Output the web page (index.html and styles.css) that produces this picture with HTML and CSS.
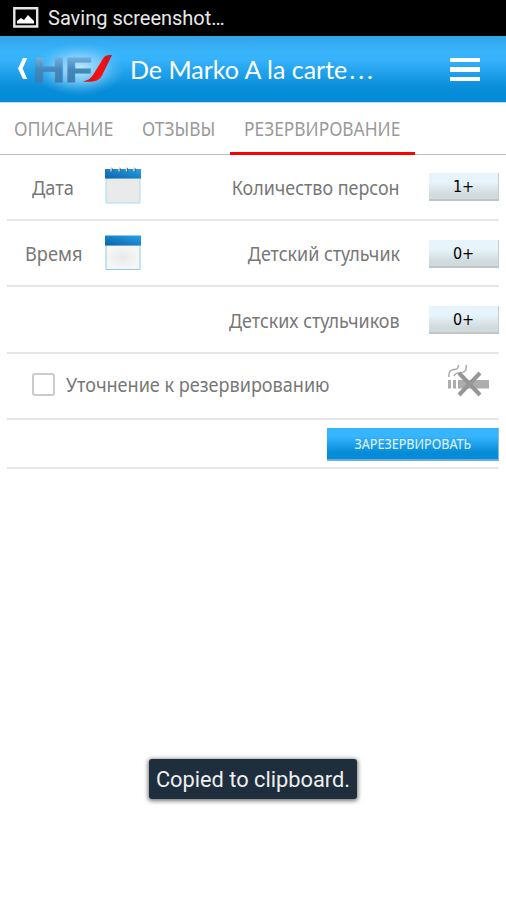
FILE: index.html
```html
<!DOCTYPE html>
<html lang="ru">
<head>
<meta charset="utf-8">
<title>De Marko A la carte</title>
<link rel="stylesheet" href="styles.css">
</head>
<body>
<div class="status">
  <svg class="status-icon" width="26" height="21" viewBox="0 0 26 21"><path d="M1.3 1.3h22.9v18.2H1.3z" fill="none" stroke="#e6e6e6" stroke-width="2.4"/><path d="M4 16.5V14l4-3 3 2 4-5 3 3 3 3v2.500z" fill="#fff"/></svg>
  <span>Saving screenshot…</span>
</div>
<header class="header">
  <svg class="back" width="12" height="24" viewBox="0 0 12 24"><path d="M6 1h4.200L5.600 11.500 10.200 22H6L1 11.500z" fill="#fff"/></svg>
  <svg class="logo" width="94" height="58" viewBox="0 0 94 58">
    <defs>
      <radialGradient id="glow"><stop offset="0" stop-color="#d8f2ff" stop-opacity=".9"/><stop offset=".5" stop-color="#a3dcff" stop-opacity=".6"/><stop offset="1" stop-color="#59bdf5" stop-opacity="0"/></radialGradient>
      <linearGradient id="steel" x1="0" y1="0" x2="0" y2="1"><stop offset=".2" stop-color="#72aedb"/><stop offset=".5" stop-color="#4389bd"/><stop offset="1" stop-color="#3977aa"/></linearGradient>
      <linearGradient id="red" x1="0" y1="0" x2="1" y2="0"><stop offset="0" stop-color="#c51018"/><stop offset=".6" stop-color="#ff1010"/><stop offset="1" stop-color="#bb1722"/></linearGradient>
    </defs>
    <ellipse cx="48" cy="29" rx="46" ry="27" fill="url(#glow)"/>
    <text class="logo-text" x="2" y="42" textLength="59" lengthAdjust="spacingAndGlyphs" fill="url(#steel)" stroke="url(#steel)">HF</text>
    <path d="M81 15c-7 0-8 1-11 7l-8 13q-3 5-10 6.500c9 1 16 0 19-6L81 15z" fill="url(#red)"/>
  </svg>
  <h1 class="title">De Marko A la carte<span class="dots">...</span></h1>
  <div class="menu"><i></i><i></i><i></i></div>
</header>
<nav class="tabs">
  <a class="tab tab-about"><span>ОПИСАНИЕ</span></a>
  <a class="tab tab-reviews"><span>ОТЗЫВЫ</span></a>
  <a class="tab tab-booking active"><span>РЕЗЕРВИРОВАНИЕ</span></a>
</nav>
<main class="form">
  <div class="row">
    <span class="name"><span>Дата</span></span>
    <svg class="cal" width="38" height="40" viewBox="0 0 38 40">
      <defs><linearGradient id="bar" x1="0" y1="1" x2="1" y2="0"><stop offset="0" stop-color="#0963a9"/><stop offset="1" stop-color="#28a1e7"/></linearGradient></defs>
      <path d="M2 13h34v25H2z" fill="#e9ebeb" stroke="#a8d9f4"/><path d="M1 4h36v9.500H1z" fill="url(#bar)"/>
      <path d="M8 3v4.500M16 3v4.500M23.500 3v4.500M31 3v4.500" stroke="#425767"/><path d="M7 6.500v-3q0-1 1-1M15 6.500v-3q0-1 1-1M22.500 6.500v-3q0-1 1-1M30 6.500v-3q0-1 1-1" fill="none" stroke="#ddd8d2" stroke-width="1.300"/>
    </svg>
    <span class="label">Количество персон</span><button class="count">1+</button>
  </div>
  <div class="row">
    <span class="name time"><span>Время</span></span>
    <svg class="cal" width="38" height="40" viewBox="0 0 38 40">
      <defs><radialGradient id="paper"><stop offset="0" stop-color="#e9ebeb"/><stop offset="1" stop-color="#f5f6f6"/></radialGradient></defs>
      <path d="M2 14h34v24.500H2z" fill="url(#paper)" stroke="#91cbea"/><path d="M1 4.500h36v10H1z" fill="url(#bar)"/>
    </svg>
    <span class="label">Детский стульчик</span><button class="count">0+</button>
  </div>
  <div class="row">
    <span class="label">Детских стульчиков</span><button class="count">0+</button>
  </div>
  <div class="row note">
    <span class="check"></span><span class="note-text">Уточнение к резервированию</span>
    <svg class="smoke" width="42" height="34" viewBox="0 0 42 34"><g fill="#adadad"><path d="M0 16h3v8.500H0zM5 16h3v8.500H5zM10 16h31v8.500H10z"/></g><path d="M1 13C0 7 4 5 7 5.500q3 0 3.500-4.500M6 12q1-3 5-3c6 0 8-3 7-8" fill="none" stroke="#aaa" stroke-width="1.500"/><path d="M11 9l21 22M32 9L11 31" stroke="#969696" stroke-width="4"/></svg>
  </div>
  <div class="row actions"><button class="submit"><span>ЗАРЕЗЕРВИРОВАТЬ</span></button></div>
</main>
<div class="toast">Copied to clipboard.</div>
</body>
</html>
```
FILE: styles.css
```css
* { box-sizing: border-box; }
body { margin: 0; width: 506px; height: 900px; overflow: hidden; background: #fff; color: #777; font-family: "Noto Sans", sans-serif; }
button { border: 0; padding: 0; }
.status { display: flex; align-items: center; height: 36px; padding-left: 13px; background: #000; color: #e8e8e8; font: 20px/36px Roboto, sans-serif; white-space: nowrap; }
.status-icon { margin: 0 9px 2px 0; }
.header { display: flex; align-items: center; height: 67px; border-bottom: 1px solid #b9e0f7; background: linear-gradient(#32a4e9, #38b4fb 24%, #37b3fb 34%, #078cd7 80%, #058bd7); }
.back { margin: 0 0 0 17px; }
.logo { margin-left: 2px; width: 94px; }
.logo-text { font: bold 35px "Liberation Sans", sans-serif; }
.title { margin: 0; padding-left: 5px; color: #fff; font: 400 25px/64px Lato, sans-serif; white-space: nowrap; }
.dots { letter-spacing: 3px; margin-left: 2px; }
.menu { display: flex; flex-direction: column; gap: 5px; margin: 1px 26px 0 auto; }
.menu i { width: 30px; height: 4.300px; background: #fff; }
.tabs { display: flex; height: 52px; border-bottom: 1px solid #bcbcbc; color: #999; font-size: 20px; line-height: 52px; white-space: nowrap; }
.tab { height: 52px; padding-left: 14px; }
.tab span, .name span { display: inline-block; transform: scaleX(.89); transform-origin: left; }
.tab-about { width: 128px; }
.tab-reviews { width: 102px; }
.tab-booking { width: 185px; }
.tab-reviews span, .tab-booking span { transform: scaleX(.867); }
.active { border-bottom: 3px solid #f00; }
.form { margin: -1px 7px 0; }
.row { display: flex; align-items: center; height: 66.500px; border-bottom: 2px solid #e6e6e6; font-size: 20px; white-space: nowrap; }
.name { width: 97px; padding: 2px 0 0 25px; }
.name span { transform: scaleX(.91); }
.name.time { padding-left: 18px; }
.cal { margin-bottom: 3px; }
.label { margin-left: auto; margin-right: 29px; padding-top: 2px; transform: scaleX(.895); transform-origin: right; }
.count { width: 70px; height: 28px; padding-top: 2px; background: linear-gradient(#e8f4fb 35%, #d1dbde 82%); border-bottom: 2px solid #bfc5c7; border-right: 1px solid #c5cdd0; color: #000; font: 16px/20px "DejaVu Sans Condensed", "DejaVu Sans", sans-serif; }
.row .count { margin-top: 2px; }
.check { width: 23px; height: 23px; margin: 1px 0 0 25px; border: 2px solid #cbcbc9; border-radius: 3px; }
.note-text { margin-left: 11px; transform: scaleX(.903); transform-origin: left; }
.note { padding-bottom: 3px; }
.smoke { margin: -7px 9px 0 auto; }
.actions { height: 49px; justify-content: flex-end; }
.submit { width: 172px; height: 33px; margin-top: 2px; background: linear-gradient(#38b5ff 25%, #058bd7 80%); border-bottom: 2px solid #6aaed9; border-right: 1px solid #83bce0; color: #e4f5ff; font: 14px/29px "Noto Sans", sans-serif; }
.submit span { display: inline-block; transform: scaleX(.9); }
.toast { position: absolute; left: 149px; top: 759px; width: 208px; height: 40px; border-radius: 3px; background: #1e2e3d; box-shadow: 0 1px 4px 1px #777; color: #eee; font: 21.800px/42px Roboto, sans-serif; text-align: center; white-space: nowrap; }
```
